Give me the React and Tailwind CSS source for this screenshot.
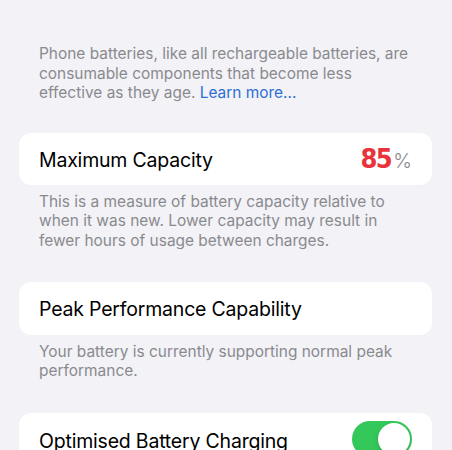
import React from 'react';

// Battery Health settings screen (grouped list style)
const Footer = ({ children, className = '' }) => (
  <p className={`px-[39px] text-[15.45px] leading-[19.6px] text-[#8a8a8e] ${className}`}>
    {children}
  </p>
);

const Card = ({ children, className = '' }) => (
  <div className={`ml-[19px] mr-[20px] rounded-[12px] bg-white flex items-center justify-between pl-[20px] pr-[20px] pt-[4px] ${className}`}>
    {children}
  </div>
);

const Toggle = ({ on }) => (
  <div className={`-mt-[4px] w-[60px] h-[36px] rounded-full p-[2px] flex ${on ? 'bg-[#34c759] justify-end' : 'bg-[#e9e9eb] justify-start'}`}>
    <div className="w-[32px] h-[32px] rounded-full bg-white shadow-[0_2px_4px_rgba(0,0,0,0.15)]" />
  </div>
);

export default function App() {
  return (
    <div className="w-[452px] h-[450px] overflow-hidden bg-[#f2f2f7] font-['Inter','Liberation_Sans',sans-serif] text-black">
      <Footer className="pt-[44px]">
        Phone batteries, like all rechargeable batteries, are consumable components that become less
        effective as they age. <span className="text-[#2d6fd2]">Learn more...</span>
      </Footer>

      <Card className="mt-[30px] h-[52px]">
        <span className="text-[19.5px] tracking-[-0.2px]">Maximum Capacity</span>
        <span className="flex items-baseline gap-[2px]">
          <span className="font-['DejaVu_Sans_Condensed','Liberation_Sans',sans-serif] font-bold text-[27px] leading-none text-[#e8333a] tracking-[-1.5px]">85</span>
          <span className="text-[20px] font-light text-[#8a8a8e]">%</span>
        </span>
      </Card>
      <Footer className="pt-[7px]">
        This is a measure of battery capacity relative to when it was new. Lower capacity may result in
        fewer hours of usage between charges.
      </Footer>

      <Card className="mt-[31px] h-[53px]">
        <span className="text-[19.5px] tracking-[-0.2px]">Peak Performance Capability</span>
      </Card>
      <Footer className="pt-[7px]">
        Your battery is currently supporting normal peak performance.
      </Footer>

      <Card className="mt-[32px] h-[53px]">
        <span className="text-[19.5px] tracking-[-0.2px]">Optimised Battery Charging</span>
        <Toggle on />
      </Card>
    </div>
  );
}
